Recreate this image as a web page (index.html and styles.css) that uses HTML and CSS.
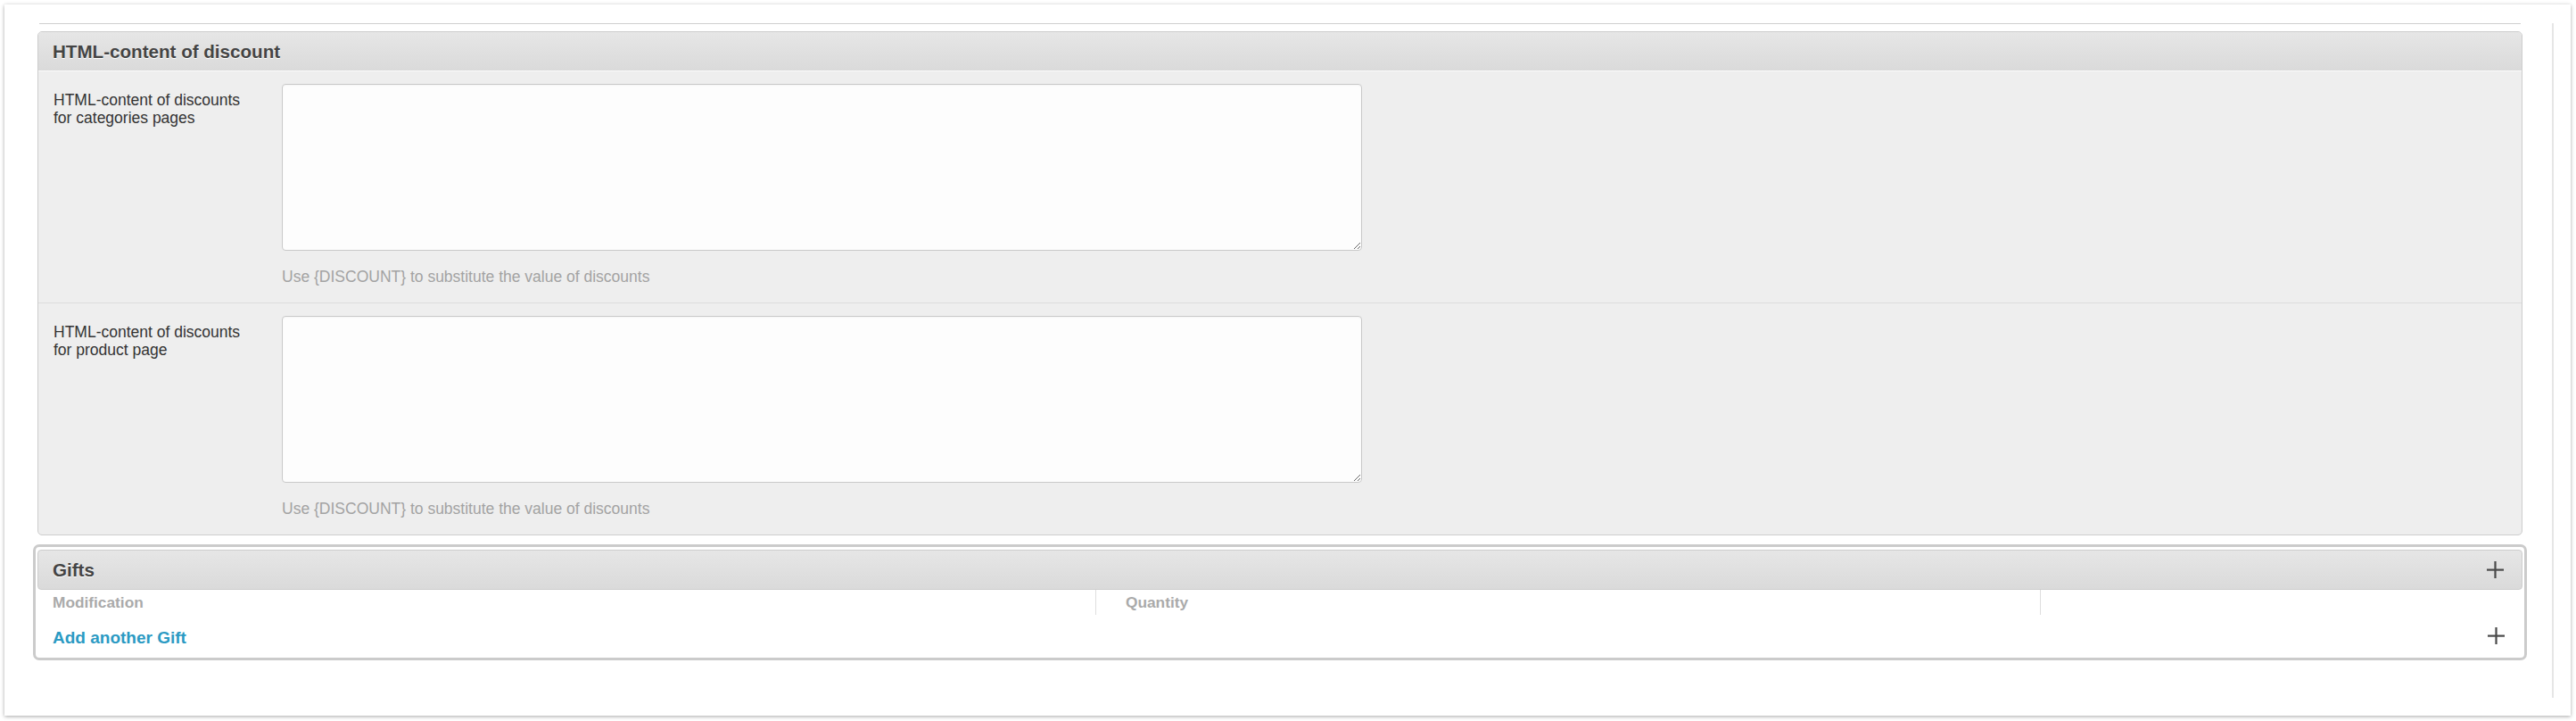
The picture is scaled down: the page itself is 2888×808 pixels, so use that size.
FILE: index.html
```html
<!DOCTYPE html>
<html lang="en">
<head>
    <meta charset="UTF-8">
    <title>Discount</title>
    <link rel="stylesheet" href="styles.css">
</head>
<body>
<div class="panel">
    <div class="content">
        <div class="sep"></div>

        <div class="box">
            <h3 class="box-head">HTML-content of discount</h3>
            <div class="box-body">
                <div class="field">
                    <label class="field-label" for="html-cat">HTML-content of discounts for categories pages</label>
                    <div class="field-input">
                        <textarea id="html-cat"></textarea>
                        <p class="hint">Use {DISCOUNT} to substitute the value of discounts</p>
                    </div>
                </div>
                <div class="field">
                    <label class="field-label" for="html-prod">HTML-content of discounts for product page</label>
                    <div class="field-input">
                        <textarea id="html-prod"></textarea>
                        <p class="hint">Use {DISCOUNT} to substitute the value of discounts</p>
                    </div>
                </div>
            </div>
        </div>

        <div class="group">
            <div class="group-head">
                <h3>Gifts</h3>
                <svg class="plus" width="19" height="19" viewBox="0 0 19 19"><rect x="0" y="8.5" width="19" height="2.2"/><rect x="8.4" y="0" width="2.2" height="19"/></svg>
            </div>
            <table class="gifts">
                <thead>
                <tr>
                    <th class="col-mod">Modification</th>
                    <th class="col-qty">Quantity</th>
                    <th class="col-del"></th>
                </tr>
                </thead>
                <tbody>
                <tr class="add-row">
                    <td colspan="3">
                        <div class="add-line">
                            <a href="#">Add another Gift</a>
                            <svg class="plus" width="19" height="19" viewBox="0 0 19 19"><rect x="0" y="8.5" width="19" height="2.2"/><rect x="8.4" y="0" width="2.2" height="19"/></svg>
                        </div>
                    </td>
                </tr>
                </tbody>
            </table>
        </div>
    </div>
</div>
</body>
</html>
```

FILE: styles.css
```css
/* reset */
body,div,h3,p,table,th,td,textarea{margin:0;padding:0}
html,body{width:100%;height:100%}
body{font-family:'Liberation Sans',Arial,Helvetica,sans-serif;font-size:17.5px;line-height:20px;color:#333;background:#fff}
a{color:#2b9ac3;text-decoration:none}
table{border-collapse:collapse;table-layout:fixed;border-spacing:0}
/* //reset */
body{
    box-sizing:border-box;
    padding:5px 6px 6px 5px;
}
.panel{
    box-sizing:border-box;
    height:797px;
    padding:21px 19px 20px 32px;
    background:#fff;
    box-shadow:0 1px 4px rgba(0,0,0,0.35);
}
.content{
    box-sizing:border-box;
    height:100%;
    padding-right:28px;
    border-right:2px solid #e6e6e6;
}
.sep{
    margin:0 7px;
    border-top:1px solid #cfcfcf;
}

/* fieldset */
.box{
    margin:8px 5px 0;
    border:1px solid #cdcdcd;
    border-radius:5px;
    overflow:hidden;
    background:#eee;
}
.box-head{
    height:43px;
    padding-left:16px;
    font-size:20.6px;
    line-height:43px;
    font-weight:bold;
    color:#444;
    text-shadow:0 1px 0 #fff;
    background:linear-gradient(#e6e6e6,#dadada);
    border-bottom:1px solid #fafafa;
}
.field{
    display:flex;
    padding:14px 0 19px;
}
.field + .field{
    border-top:1px solid #dcdcdc;
}
.field-label{
    width:220px;
    margin:8px 36px 0 17px;
}
.field-input textarea{
    display:block;
    box-sizing:border-box;
    width:1211px;
    height:187px;
    background:#fdfdfd;
    border:1px solid #c9c9c9;
    border-radius:4px;
    box-shadow:inset 0 1px 2px rgba(0,0,0,0.04);
}
.hint{
    margin-top:19px;
    color:#a3a3a3;
}

/* inline group */
.group{
    margin-top:10px;
    padding:3px 2px 0;
    border:3px solid #cbcbcb;
    border-radius:7px;
}
.group-head{
    display:flex;
    align-items:center;
    justify-content:space-between;
    height:43px;
    padding:0 20px 0 16px;
    border:1px solid #cdcdcd;
    border-radius:4px;
    background:linear-gradient(#e6e6e6,#dadada);
}
.group-head h3{
    font-size:20.6px;
    font-weight:bold;
    color:#444;
    text-shadow:0 1px 0 #fff;
}
.plus{
    fill:#4a4a4a;
}
.gifts{
    width:100%;
}
.gifts th{
    height:28px;
    padding:0 0 0 17px;
    font-size:17.3px;
    line-height:28px;
    font-weight:bold;
    color:#aaa;
    text-align:left;
}
.gifts th + th{
    padding-left:33px;
    border-left:1px solid #dedede;
}
.col-mod{width:1169px}
.col-qty{width:1025px}
.add-line{
    display:flex;
    align-items:center;
    justify-content:space-between;
    height:48px;
    padding:0 20px 0 17px;
}
.add-line a{
    margin-top:3px;
    font-size:19px;
    line-height:48px;
    font-weight:bold;
}
.add-line .plus{
    margin-top:-2px;
}
```
